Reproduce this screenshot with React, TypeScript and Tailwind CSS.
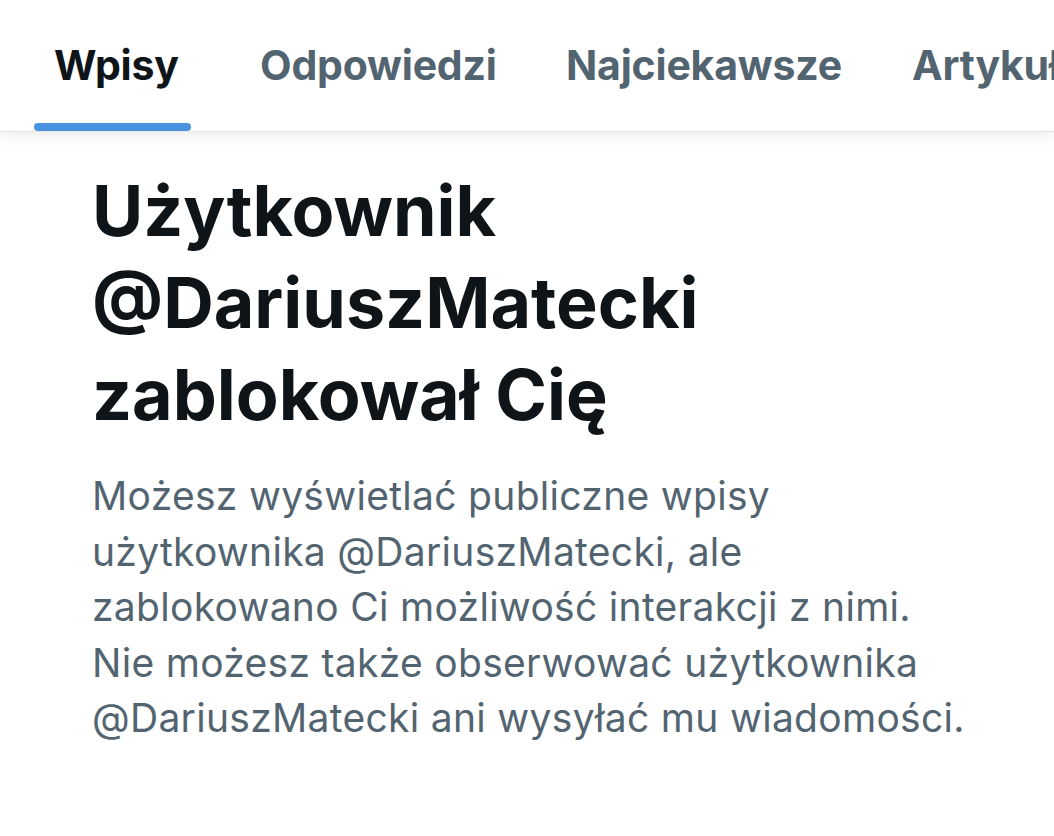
export default function App() {
  const tabs = [
    { label: "Wpisy", active: true, w: "w-[206px]" },
    { label: "Odpowiedzi", active: false, w: "w-[306px]" },
    { label: "Najciekawsze", active: false, w: "w-[346px]" },
    { label: "Artykuły", active: false, w: "w-[200px]" },
  ];

  return (
    <div className="h-[836px] w-[1054px] overflow-hidden bg-white font-['Inter',sans-serif]">
      <div className="relative flex h-[132px] border-b border-[#e3e6e8] pl-[54px] shadow-[0_5px_14px_rgba(0,0,0,0.07)]">
        {tabs.map((tab) => (
          <div key={tab.label} className={`relative flex shrink-0 items-center ${tab.w}`}>
            <span
              className={`whitespace-nowrap text-[41px] leading-none font-bold tracking-[-0.2px] ${
                tab.active ? "text-[#0f1419]" : "text-[#536471]"
              }`}
            >
              {tab.label}
            </span>
            {tab.active && (
              <div className="absolute bottom-0 left-[-20px] h-[8px] w-[157px] rounded-full bg-[#4a93e0]" />
            )}
          </div>
        ))}
      </div>

      <div className="pl-[92px] pr-[40px] pt-[33px]">
        <h1 className="text-[70px] leading-[92px] font-bold text-[#0f1419]">
          Użytkownik
          <br />
          @DariuszMatecki
          <br />
          zablokował Cię
        </h1>
        <p className="mt-[27px] whitespace-nowrap text-[39px] leading-[55.5px] tracking-[0.3px] text-[#536471]">
          Możesz wyświetlać publiczne wpisy
          <br />
          użytkownika @DariuszMatecki, ale
          <br />
          zablokowano Ci możliwość interakcji z nimi.
          <br />
          Nie możesz także obserwować użytkownika
          <br />
          @DariuszMatecki ani wysyłać mu wiadomości.
        </p>
      </div>
    </div>
  );
}
